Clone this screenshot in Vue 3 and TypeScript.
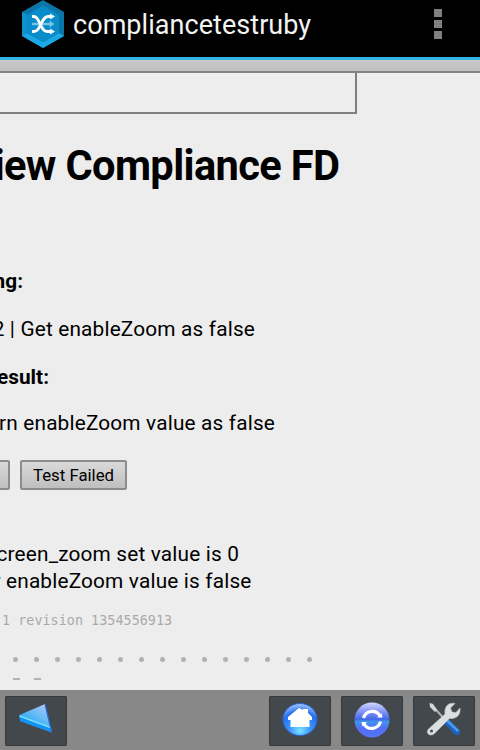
<script setup lang="ts">
const dotCount = 15
const dashCount = 2
</script>

<template>
  <div class="screen">
    <header class="bar">
      <svg class="logo" viewBox="0 0 42 48" width="42" height="48">
        <path d="M21 0 42 12V36L21 48 0 36V12Z" fill="#0b75a7" />
        <path d="M0 12 5 15V33L21 42 37 33 42 36 21 48 0 36Z" fill="#1ba8e4" />
        <path d="M0 12 5 15V33L0 36Z" fill="#1190c9" />
        <path d="M21 5.5 37 15V33L21 42 5 33V15Z" fill="#098dca" />
        <path d="M10 24H29" stroke="#78c5e8" stroke-width="2.4" />
        <path d="M27.500 20.500 32.500 24 27.500 27.500Z" fill="#78c5e8" />
        <g fill="none" stroke="#fff" stroke-width="2.8">
          <path d="M10 16.500H12C18 16.500 18 31.500 25 31.500H29" />
          <path d="M10 31.500H12C19 31.500 19 16.500 26 16.500H29" />
        </g>
        <path d="M28 13.500 33 16.500 28 19.500ZM28 28.500 33 31.500 28 34.500Z" fill="#fff" />
      </svg>
      <h1 class="title">compliancetestruby</h1>
      <div class="menu"><i></i><i></i><i></i></div>
    </header>
    <div class="strip"></div>
    <main class="page">
      <div class="frame"></div>
      <h2 class="line heading"><span>iew Compliance FD</span></h2>
      <p class="line strong testing"><span>ng:</span></p>
      <p class="line name"><span>2 | Get enableZoom as false</span></p>
      <p class="line strong result"><span>esult:</span></p>
      <p class="line expected"><span>rn enableZoom value as false</span></p>
      <div class="buttons">
        <button class="btn cut" aria-label="Test Passed"></button>
        <button class="btn">Test Failed</button>
      </div>
      <p class="line out1"><span>creen_zoom set value is 0</span></p>
      <p class="line out2"><span>r enableZoom value is false</span></p>
      <p class="revision">1 revision 1354556913</p>
      <div class="marks dots"><i v-for="n in dotCount" :key="n"></i></div>
      <div class="marks dashes"><i v-for="n in dashCount" :key="n"></i></div>
    </main>
    <footer class="toolbar">
      <button class="tool back" aria-label="Back">
        <svg viewBox="0 0 62 50" width="62" height="50">
          <defs>
            <linearGradient id="arrow" x1="1" y1="0" x2="0.3" y2="1">
              <stop offset="0" stop-color="#c6c9f3" />
              <stop offset=".55" stop-color="#58b8f6" />
              <stop offset="1" stop-color="#168ff0" />
            </linearGradient>
          </defs>
          <path d="M14.500 19 40 8 47 36.500 15 25Z" fill="url(#arrow)" />
          <path d="M14.500 19.500 46 31 47 36.500 15 25Z" fill="#1491f3" />
          <path d="M14.500 20 45.500 31.500" stroke="#71e2ff" stroke-width="1.8" />
          <path d="M40 8 46.500 36" stroke="#2669d6" stroke-width="1.2" />
        </svg>
      </button>
      <button class="tool" aria-label="Home">
        <svg viewBox="0 0 62 50" width="62" height="50">
          <defs>
            <radialGradient id="home" cx=".5" cy=".85" r=".85">
              <stop offset="0" stop-color="#7de5ff" />
              <stop offset=".35" stop-color="#3c98ff" />
              <stop offset=".7" stop-color="#246ff0" />
              <stop offset="1" stop-color="#a9c8ff" />
            </radialGradient>
          </defs>
          <ellipse cx="31" cy="23.500" rx="17" ry="16" fill="url(#home)" stroke="#2d64cf" />
          <path d="M19 21 30 12 34 14V13H39V17L43 21V24H40.500V31H21.500V24H19Z" fill="#fff" />
        </svg>
      </button>
      <button class="tool" aria-label="Reload">
        <svg viewBox="0 0 62 50" width="62" height="50">
          <defs>
            <linearGradient id="reload" x1="0" y1="0" x2="0" y2="1">
              <stop offset="0" stop-color="#cfd8ff" />
              <stop offset=".25" stop-color="#8797f7" />
              <stop offset=".48" stop-color="#4267ea" />
              <stop offset=".55" stop-color="#4195ed" />
              <stop offset=".75" stop-color="#536bf5" />
              <stop offset="1" stop-color="#5577f5" />
            </linearGradient>
          </defs>
          <circle cx="31" cy="24" r="17.500" fill="url(#reload)" />
          <g fill="none" stroke="#fff" stroke-width="3.200">
            <path d="M22.500 22A9 9 0 0 1 39 20" />
            <path d="M39.500 25.500A9 9 0 0 1 23 28" />
          </g>
          <path d="M36 21.500 41.500 21.500 40.500 17ZM26 26 20.500 26 21.500 30.500Z" fill="#fff" />
        </svg>
      </button>
      <button class="tool" aria-label="Settings">
        <svg viewBox="0 0 62 50" width="62" height="50">
          <path d="M18 8 33 25" stroke="#aeb2b6" stroke-width="2" />
          <path d="M16.500 7 20 8 24 14 22 16 17 11Z" fill="#d4d6d8" />
          <path d="M32 24 44 36" stroke="#1f62bd" stroke-width="6.500" stroke-linecap="round" />
          <path d="M33 23.500 44.500 34.500" stroke="#4b9bec" stroke-width="2.500" stroke-linecap="round" />
          <path d="M15.500 33 32 18C31 11 35 6 42 7.500L37.500 12 39 16 43 16.500 47 12C48 19 43 23.500 36.500 22.500L21 38C17 41 12 37 15.500 33Z" fill="#dedfe0" stroke="#b8babc" stroke-width=".6" />
          <circle cx="18.500" cy="35" r="1.600" fill="#50565a" />
        </svg>
      </button>
    </footer>
  </div>
</template>

<style>
body {
  margin: 0;
}
</style>

<style scoped>
.screen {
  width: 480px;
  height: 750px;
  display: flex;
  flex-direction: column;
  overflow: hidden;
  background: #ededed;
  color: #000;
  font-family: Roboto, "Liberation Sans", sans-serif;
}
.bar {
  height: 57px;
  flex: none;
  box-sizing: border-box;
  display: flex;
  align-items: flex-start;
  padding-left: 22px;
  background: #000;
}
.logo {
  display: block;
}
.title {
  margin: 0 0 0 9px;
  color: #f3f3f3;
  font-size: 27px;
  font-weight: 400;
  letter-spacing: 0.050px;
  line-height: 50px;
  white-space: nowrap;
}
.menu {
  display: flex;
  flex-direction: column;
  gap: 3px;
  margin: 9px 38px 0 auto;
}
.menu i {
  width: 8px;
  height: 8px;
  background: #808080;
}
.strip {
  height: 16px;
  flex: none;
  box-sizing: border-box;
  border-top: 3px solid #33b5e5;
  border-bottom: 2px solid #828282;
  background: linear-gradient(#cacaca, #bebebe);
}
.page {
  height: 617px;
  flex: none;
  overflow: hidden;
}
.frame {
  width: 357px;
  height: 41px;
  box-sizing: border-box;
  border: solid #808080;
  border-width: 0 2px 2px 0;
}
.line {
  display: flex;
  justify-content: flex-end;
  margin: 0;
  overflow: hidden;
  font-size: 20.800px;
  letter-spacing: 0.170px;
  line-height: 27px;
  white-space: nowrap;
}
.line span {
  flex: none;
}
.heading {
  width: 339.500px;
  margin-top: 27px;
  font-size: 41.600px;
  font-weight: 700;
  letter-spacing: -0.620px;
  line-height: 50px;
}
.strong {
  font-weight: 700;
  letter-spacing: 0;
}
.testing {
  width: 23px;
  margin-top: 77px;
}
.name {
  width: 255px;
  margin-top: 21px;
}
.result {
  width: 49px;
  margin-top: 21px;
}
.expected {
  width: 275px;
  margin-top: 19px;
}
.buttons {
  display: flex;
  gap: 10px;
  margin: 23px 0 0 -10px;
}
.btn {
  width: 107px;
  height: 30px;
  box-sizing: border-box;
  padding: 0;
  border: 2px solid #8c8c8c;
  border-radius: 2px;
  background: linear-gradient(#d9d9d9, #bfbfbf);
  color: #000;
  font: 16.800px/26px Roboto, sans-serif;
}
.cut {
  width: 20px;
}
.out1 {
  width: 239px;
  margin-top: 51px;
}
.out2 {
  width: 251.500px;
}
.revision {
  margin: 16px 0 0 2px;
  color: #aaa;
  font: 13.400px/20px "DejaVu Sans Mono", monospace;
  letter-spacing: 0.040px;
  white-space: nowrap;
}
.marks {
  display: flex;
  margin-left: 13px;
}
.dots {
  gap: 16px;
  margin-top: 26px;
}
.dots i {
  width: 5px;
  height: 5px;
  border-radius: 50%;
  background: #b2b2b2;
}
.dashes {
  gap: 14px;
  margin-top: 16px;
}
.dashes i {
  width: 7px;
  height: 2px;
  background: #b2b2b2;
}
.toolbar {
  height: 60px;
  flex: none;
  box-sizing: border-box;
  display: flex;
  gap: 10px;
  padding: 6px 5px 0;
  background: #888;
}
.tool {
  width: 62px;
  height: 50px;
  padding: 0;
  box-sizing: border-box;
  border: 0;
  border-radius: 2px;
  background: #42484b;
  box-shadow: inset 0 0 0 1px #35393b;
}
.tool svg {
  display: block;
}
.back {
  margin-right: auto;
}
</style>
